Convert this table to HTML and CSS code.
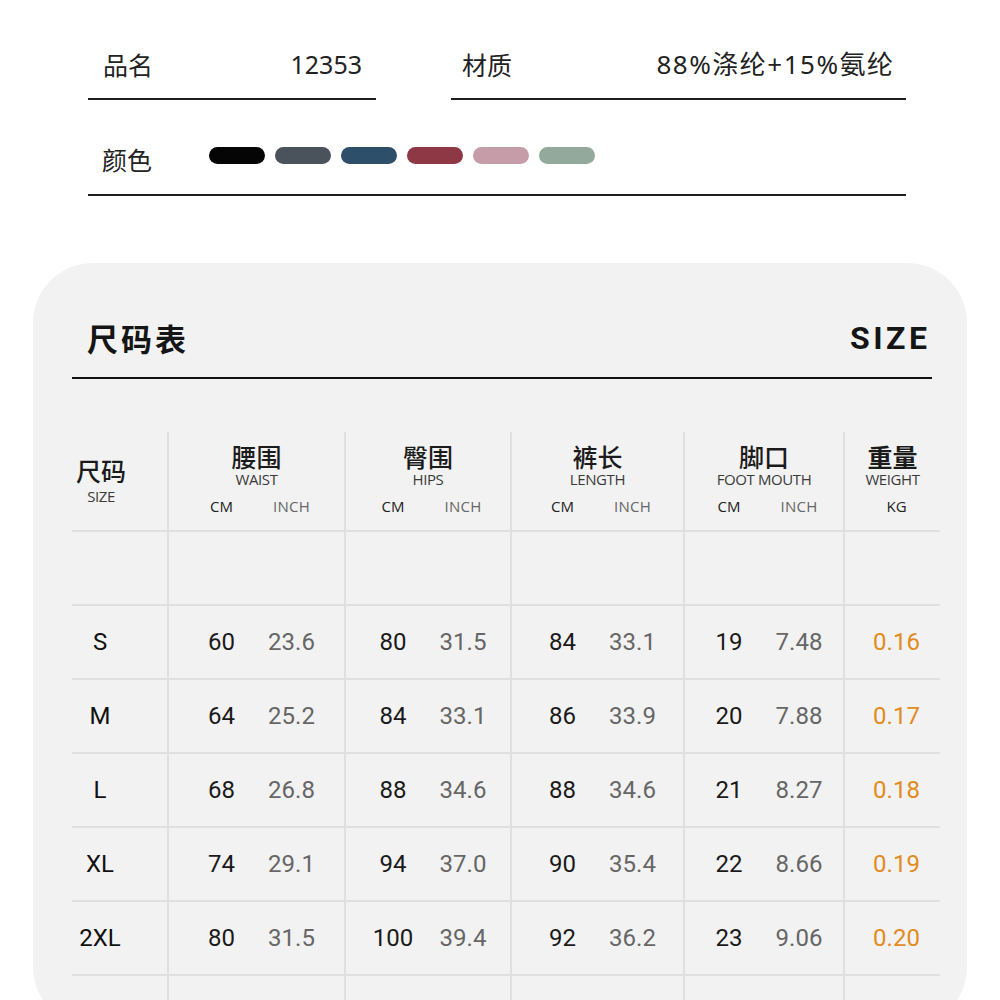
FILE: index.html
```html
<!DOCTYPE html>
<html lang="zh">
<head>
<meta charset="utf-8">
<title>尺码表</title>
<link rel="stylesheet" href="styles.css">
</head>
<body>
<section class="info">
  <div class="info-row">
    <div class="field field-name"><span class="label">品名</span><span class="value">12353</span></div>
    <div class="field field-mat"><span class="label">材质</span><span class="value value-mat">88%涤纶+15%氨纶</span></div>
  </div>
  <div class="color-row">
    <span class="label">颜色</span>
    <div class="swatches">
      <span class="swatch c1"></span>
      <span class="swatch c2"></span>
      <span class="swatch c3"></span>
      <span class="swatch c4"></span>
      <span class="swatch c5"></span>
      <span class="swatch c6"></span>
    </div>
  </div>
</section>

<section class="card">
  <div class="card-head">
    <h1 class="title">尺码表</h1>
    <span class="title-en">SIZE</span>
  </div>

  <div class="table">
    <div class="row head">
      <div class="cell first"><div class="h-cn">尺码</div><div class="h-en">SIZE</div></div>
      <div class="cell"><div class="h-cn">腰围</div><div class="h-en">WAIST</div><div class="pair units"><span class="u-cm">CM</span><span class="u-in">INCH</span></div></div>
      <div class="cell"><div class="h-cn">臀围</div><div class="h-en">HIPS</div><div class="pair units"><span class="u-cm">CM</span><span class="u-in">INCH</span></div></div>
      <div class="cell"><div class="h-cn">裤长</div><div class="h-en">LENGTH</div><div class="pair units"><span class="u-cm">CM</span><span class="u-in">INCH</span></div></div>
      <div class="cell"><div class="h-cn">脚口</div><div class="h-en">FOOT MOUTH</div><div class="pair units"><span class="u-cm">CM</span><span class="u-in">INCH</span></div></div>
      <div class="cell weight"><div class="h-cn bold">重量</div><div class="h-en">WEIGHT</div><div class="units kg">KG</div></div>
    </div>

    <div class="row blank">
      <div class="cell first"></div><div class="cell"></div><div class="cell"></div><div class="cell"></div><div class="cell"></div><div class="cell"></div>
    </div>

    <div class="row data">
      <div class="cell first">S</div>
      <div class="cell pair"><span class="cm">60</span><span class="in">23.6</span></div>
      <div class="cell pair"><span class="cm">80</span><span class="in">31.5</span></div>
      <div class="cell pair"><span class="cm">84</span><span class="in">33.1</span></div>
      <div class="cell pair"><span class="cm">19</span><span class="in">7.48</span></div>
      <div class="cell weight kgv">0.16</div>
    </div>
    <div class="row data">
      <div class="cell first">M</div>
      <div class="cell pair"><span class="cm">64</span><span class="in">25.2</span></div>
      <div class="cell pair"><span class="cm">84</span><span class="in">33.1</span></div>
      <div class="cell pair"><span class="cm">86</span><span class="in">33.9</span></div>
      <div class="cell pair"><span class="cm">20</span><span class="in">7.88</span></div>
      <div class="cell weight kgv">0.17</div>
    </div>
    <div class="row data">
      <div class="cell first">L</div>
      <div class="cell pair"><span class="cm">68</span><span class="in">26.8</span></div>
      <div class="cell pair"><span class="cm">88</span><span class="in">34.6</span></div>
      <div class="cell pair"><span class="cm">88</span><span class="in">34.6</span></div>
      <div class="cell pair"><span class="cm">21</span><span class="in">8.27</span></div>
      <div class="cell weight kgv">0.18</div>
    </div>
    <div class="row data">
      <div class="cell first">XL</div>
      <div class="cell pair"><span class="cm">74</span><span class="in">29.1</span></div>
      <div class="cell pair"><span class="cm">94</span><span class="in">37.0</span></div>
      <div class="cell pair"><span class="cm">90</span><span class="in">35.4</span></div>
      <div class="cell pair"><span class="cm">22</span><span class="in">8.66</span></div>
      <div class="cell weight kgv">0.19</div>
    </div>
    <div class="row data">
      <div class="cell first">2XL</div>
      <div class="cell pair"><span class="cm">80</span><span class="in">31.5</span></div>
      <div class="cell pair"><span class="cm">100</span><span class="in">39.4</span></div>
      <div class="cell pair"><span class="cm">92</span><span class="in">36.2</span></div>
      <div class="cell pair"><span class="cm">23</span><span class="in">9.06</span></div>
      <div class="cell weight kgv">0.20</div>
    </div>
    <div class="row data">
      <div class="cell first"></div><div class="cell"></div><div class="cell"></div><div class="cell"></div><div class="cell"></div><div class="cell"></div>
    </div>
  </div>
</section>
</body>
</html>
```

FILE: styles.css
```css
* { box-sizing: border-box; }

html, body {
  margin: 0;
  padding: 0;
  background: #ffffff;
  font-family: "Noto Sans CJK SC", "Noto Sans", sans-serif;
  color: #222;
}

body {
  width: 1000px;
  height: 1000px;
  overflow: hidden;
}

/* ---------- top info ---------- */
.info {
  padding: 30px 94px 0 88px;
}

.info-row {
  display: flex;
  gap: 75px;
}

.field {
  height: 70px;
  border-bottom: 2px solid #1e1e1e;
  display: flex;
  align-items: center;
  justify-content: space-between;
  font-size: 25px;
  line-height: 30px;
  color: #222;
}

.field-name {
  width: 288px;
  padding: 0 14px 0 15px;
}

.field-mat {
  flex: 1;
  padding: 0 13px 0 11px;
}

.value {
  font-family: "Noto Sans", "Noto Sans CJK SC", sans-serif;
  font-size: 25px;
}

.value-mat {
  font-size: 26px;
  letter-spacing: 1.5px;
  margin-right: -1.5px;
}

.color-row {
  height: 96px;
  border-bottom: 2px solid #1e1e1e;
  display: flex;
  align-items: flex-start;
  padding: 44px 0 0 14px;
  font-size: 25px;
  line-height: 30px;
}

.color-row .label {
  width: 107px;
}

.swatches {
  display: flex;
  gap: 10px;
  margin-top: 3px;
}

.swatch {
  width: 56px;
  height: 17px;
  border-radius: 9px;
}
.c1 { background: #050505; }
.c2 { background: #4a535b; }
.c3 { background: #2d4f69; }
.c4 { background: #8e3846; }
.c5 { background: #c69ca8; }
.c6 { background: #93a99b; }

/* ---------- card ---------- */
.card {
  margin: 67px 0 0 33px;
  width: 934px;
  height: 764px;
  background: #f2f2f2;
  border-radius: 60px;
  padding: 0 27px 0 39px;
}

.card-head {
  height: 116px;
  margin-right: 8px;
  border-bottom: 2px solid #111;
  display: flex;
  align-items: flex-end;
  justify-content: space-between;
  padding: 0 5px 19px 15px;
}

.title {
  margin: 0;
  font-size: 31px;
  line-height: 40px;
  font-weight: 700;
  letter-spacing: 3px;
  color: #151515;
}

.title-en {
  font-family: "Roboto", "Noto Sans", sans-serif;
  font-weight: 700;
  font-size: 32px;
  line-height: 40px;
  letter-spacing: 3.5px;
  margin-right: -3.5px;
  color: #151515;
}

/* ---------- table ---------- */
.table {
  margin-top: 53px;
}

.row {
  display: grid;
  grid-template-columns: 95px 177px 166px 173px 160px 97px;
}

.row + .row {
  border-top: 2px solid #e0e0e0;
}

.cell + .cell {
  border-left: 2px solid #e0e0e0;
}

.head {
  height: 98px;
}

.head .cell {
  display: flex;
  flex-direction: column;
  align-items: center;
  padding-top: 12px;
}

.head .cell.first {
  align-items: flex-start;
  padding: 26px 0 0 0;
}

.head .cell.first .h-cn,
.head .cell.first .h-en {
  width: 56px;
  text-align: center;
  margin-left: 1px;
}

.head .cell.first .h-en {
  margin-top: 6px;
}

.h-cn {
  font-size: 25px;
  line-height: 25px;
  font-weight: 500;
  color: #1b1b1b;
}

.h-cn.bold {
  font-weight: 700;
}

.h-en {
  margin-top: 3px;
  font-family: "Open Sans", "Noto Sans", sans-serif;
  font-size: 15px;
  line-height: 15px;
  color: #3a3a3a;
  letter-spacing: -0.4px;
}

.units {
  margin-top: 10px;
  font-family: "Open Sans", "Noto Sans", sans-serif;
  font-size: 15px;
  line-height: 18px;
}

.pair {
  display: flex;
  justify-content: center;
}

.pair > span {
  width: 70px;
  text-align: center;
}

.u-cm { color: #222; }
.u-in { color: #666; letter-spacing: 0.3px; }

.kg {
  color: #222;
  padding-left: 8px;
}

.blank {
  height: 74px;
}

.data {
  height: 74px;
  font-family: "Roboto", "Noto Sans", sans-serif;
  font-size: 24px;
}

.data .cell {
  display: flex;
  align-items: center;
}

.data .cell.pair {
  justify-content: center;
}

.cm { color: #1a1a1a; }
.in { color: #666; }

.kgv {
  justify-content: center;
  padding-left: 8px;
  color: #e38a20;
}

.data .cell.first {
  justify-content: center;
  padding-right: 39px;
  color: #111;
}
```
